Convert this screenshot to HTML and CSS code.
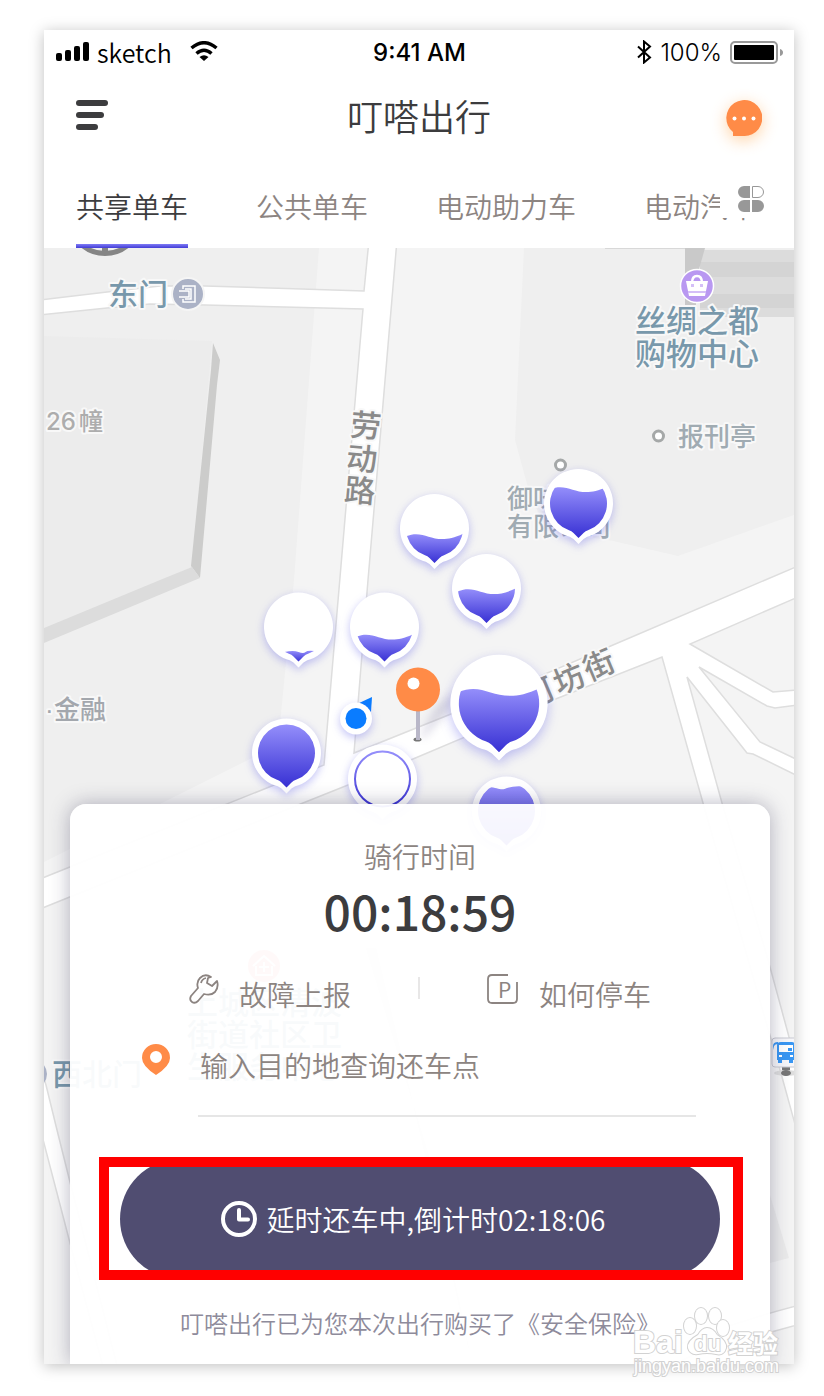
FILE: index.html
```html
<!DOCTYPE html>
<html lang="zh-CN">
<head>
    <meta charset="UTF-8">
    <meta name="viewport" content="width=device-width, initial-scale=1.0">
    <title>叮嗒出行</title>
    <link rel="stylesheet" href="styles.css">
</head>
<body>
    <div class="phone">
        <header>
            <!-- 状态栏 -->
            <div class="status">
                <div class="status-left">
                    <svg width="34" height="21" viewBox="0 0 34 21"><rect x="0" y="12" width="6" height="8" rx="2"/><rect x="9" y="9" width="6" height="11" rx="2"/><rect x="18" y="5" width="6" height="15" rx="2"/><rect x="27" y="1" width="6" height="19" rx="2"/></svg>
                    <span class="carrier">sketch</span>
                    <svg class="wifi" width="28" height="21" viewBox="0 0 28 21"><path d="M1.500 7Q14-3.500 26.500 7M6.500 12.500Q14 6 21.500 12.500" fill="none" stroke="#000" stroke-width="3.500"/><path d="M9.500 16Q14 12.500 18.500 16L14 20Z"/></svg>
                </div>
                <span class="time">9:41 AM</span>
                <div class="status-right">
                    <svg width="16" height="24" viewBox="0 0 16 24"><path d="M2 6.500L14 17.500L8 22.500V1.500L14 6.500L2 17.500" fill="none" stroke="#000" stroke-width="2"/></svg>
                    <span class="percent">100%</span>
                    <svg width="53" height="23" viewBox="0 0 53 23"><rect x="1" y="1" width="46" height="21" rx="4" fill="#fff" stroke="#999" stroke-width="2"/><rect x="4" y="4" width="40" height="15" rx="1"/><path d="M50 8Q53 9 53 11.500T50 15Z" fill="#999"/></svg>
                </div>
            </div>

            <!-- 标题栏 -->
            <div class="titlebar">
                <button class="icon-btn" aria-label="菜单">
                    <svg width="32" height="30" viewBox="0 0 32 30" fill="#3c3c3e"><rect width="32" height="6" rx="3"/><rect y="12" width="28" height="6" rx="3"/><rect y="24" width="22" height="6" rx="3"/></svg>
                </button>
                <h1>叮嗒出行</h1>
                <button class="icon-btn chat" aria-label="消息">
                    <svg width="36" height="36" viewBox="0 0 36 36"><path d="M7 36V32A18 18 0 1 1 18 36Z" fill="#ff8b47"/><circle cx="8.500" cy="18.500" r="2" fill="#fff"/><circle cx="18" cy="18.500" r="2" fill="#fff"/><circle cx="27.500" cy="18.500" r="2" fill="#fff"/></svg>
                </button>
            </div>

            <!-- 车型切换 -->
            <nav class="tabs">
                <button class="tab active">共享单车</button>
                <button class="tab">公共单车</button>
                <button class="tab">电动助力车</button>
                <button class="tab">电动汽车</button>
                <button class="more" aria-label="全部">
                    <svg width="28" height="28" viewBox="0 0 28 28" fill="#989898"><path d="M13 1V13H7A6 6 0 0 1 7 1ZM13 15V27H7A6 6 0 0 1 7 15ZM15 15V27H21A6 6 0 0 0 21 15Z"/><path d="M15.500 1.500V12.500H21A5.500 5.500 0 0 0 21 1.500Z" fill="#fff" stroke="#989898"/></svg>
                </button>
            </nav>
        </header>

        <main>
            <svg class="map" viewBox="44 248 750 1116" preserveAspectRatio="xMidYMin slice">
                <defs>
                    <linearGradient id="liquid" x1="0" y1="0" x2="0" y2="1">
                        <stop offset="0" stop-color="#958ffb"/>
                        <stop offset="1" stop-color="#362fd3"/>
                    </linearGradient>
                    <clipPath id="inner">
                        <path d="M0 34.500L-5 29.500Q-7 27.500-9.500 26.800A28.500 28.500 0 1 1 9.500 26.800Q7 27.500 5 29.500Z"/>
                    </clipPath>
                    <path id="drop" d="M0 40.500L-5 35.500Q-9 32.500-12 32.300A34.500 34.500 0 1 1 12 32.300Q9 32.500 5 35.500Z"/>
                    <filter id="soft" x="-50%" y="-50%" width="200%" height="200%"><feGaussianBlur stdDeviation="4"/></filter>
                </defs>

                <!-- 地块 -->
                <rect x="44" y="248" width="750" height="1116" fill="#f4f4f4"/>
                <path class="block" d="M44 248H319L294 580L278 745L44 862Z"/>
                <path class="block" d="M524 248L515 440L527 484L545 530L613 541L678 556L794 515V248Z"/>
                <circle cx="105" cy="218" r="35.500" fill="none" stroke="#858585" stroke-width="5"/>
                <path d="M102 240H108V255H102Z" fill="#858585"/>

                <!-- 建筑 -->
                <path d="M44 336L212 341L192 567L44 632Z" fill="#ececec"/>
                <path d="M213 343L220 360L217 385L200 578L191 566L211 370Z" fill="#cccccb"/>
                <path d="M44 628L160 580L192 567L200 578L44 643Z" fill="#dcdcdc"/>
                <path d="M605 248H700V249H605Z" fill="#d8d8d8"/>
                <path d="M700 250H794V317H700Z" fill="#dcdcdc"/>
                <path d="M700 262H794V277H700ZM700 294H794V308H700Z" fill="#d4d4d4"/>
                <path d="M685 248H705L696 280V305H685Z" fill="#c9c9c9"/>
                <path d="M770 1195L789 1258L770 1263Z" fill="#ebebeb"/>
                <path d="M366 948L376 948L424 1150L472 1364L430 1160Z" fill="#dedede"/>

                <!-- 道路 -->
                <path class="road" d="M40 879L324 765L346 507L363 309L205 305L150 304L107 308L40 315V300L107 292L160 286L205 286L364 291L369 240H397L368 580L354 753L451 714L613 645L798 566V597L690 644L773 692L798 690V705L775 708L767 706L699 667L760 742L798 760V776L753 754L747 753L687 677L722 803L770 967L789 1037L798 1065V1135L782 1077L703 803L662 657L548 702L413 759L303 803L40 909Z"/>
                <path class="road" d="M40 1065L46 1085L57 1130L70 1182L118 1370H104L70 1243L40 1128Z"/>
                <path class="road" d="M620 1370Q710 1328 800 1305V1324L700 1352L660 1370Z"/>

                <!-- 地名 -->
                <text class="place" x="108" y="305">东门</text>
                <g transform="translate(188 294)">
                    <circle r="16" fill="#abb2c6" stroke="#f5f5f5" stroke-width="2"/>
                    <path d="M-5-5V-8H7V8H-5V5M-9-3H1V3H-9M-3-5H3V5H-3" fill="none" stroke="#fff" stroke-width="1.500"/>
                </g>
                <text class="building" x="46" y="430">26<tspan dx="3">幢</tspan></text>
                <g class="street">
                    <text transform="translate(366 426) rotate(5)" y="11">劳</text>
                    <text transform="translate(362 459) rotate(5)" y="11">动</text>
                    <text transform="translate(360 491) rotate(5)" y="11">路</text>
                    <text transform="translate(538 693) rotate(-23)" y="11">河</text>
                    <text transform="translate(569 679) rotate(-23)" y="11">坊</text>
                    <text transform="translate(599 665) rotate(-23)" y="11">街</text>
                </g>
                <text class="place mall" x="635" y="332">丝绸之都</text>
                <text class="place mall" x="635" y="365">购物中心</text>
                <g transform="translate(697 286)">
                    <circle r="16.500" fill="#b998f1" stroke="#fff" stroke-width="1.500"/>
                    <path d="M-11-5H11L8 10H-8Z" fill="#fff"/>
                    <path d="M-5-3Q-5-10 0-10T5-3" fill="none" stroke="#fff" stroke-width="2.500"/>
                    <path d="M-9 5H9V7H-9ZM-6-2H-3V1H-6ZM3-2H6V1H3Z" fill="#d4bff7"/>
                </g>
                <circle class="dot" cx="658.500" cy="436" r="5"/>
                <text class="poi" x="678" y="446">报刊亭</text>
                <circle class="dot" cx="560.500" cy="465" r="5"/>
                <text class="poi" x="507" y="508">御味</text>
                <text class="poi" x="507" y="536">有限公司</text>
                <text class="poi bank" x="45" y="719">·<tspan x="54">金融</tspan></text>
                <circle cx="33" cy="1074" r="14" fill="#abb2c6"/>
                <text class="place" x="52" y="1085">西北门</text>
                <g transform="translate(264 966)">
                    <circle r="16" fill="#f58c8c"/>
                    <path d="M-11 0L0-10L11 0M-8 0V9H8V0M0-4V6M-5 1H5" fill="none" stroke="#fff" stroke-width="2"/>
                </g>
                <text class="place mall" x="187" y="1014">上城区清波</text>
                <text class="place mall" x="187" y="1046">街道社区卫</text>
                <text class="place mall" x="187" y="1078">生服务中心</text>
                <g transform="translate(772 1038)">
                    <path d="M10 29H18V34H10Z" fill="#777"/>
                    <ellipse cx="14" cy="35" rx="12" ry="3" fill="#ddd"/>
                    <ellipse cx="14" cy="35" rx="5" ry="3" fill="#777"/>
                    <rect x="0" y="0" width="30" height="29" rx="3" fill="#f7f7fa" stroke="#c9cad2"/>
                    <path d="M5 7Q5 4 9 4H20Q23 4 23 8V22H21V25H17V22H10V25H6V22H5Z" fill="#3997f3"/>
                    <path d="M7 7H21V14H7Z" fill="#fff"/>
                    <path d="M16 10H20V13H16ZM2 12V8Q3 6 6 6V4Q1 4 1 8Z" fill="#3997f3"/>
                    <path d="M7 17H10V19H7ZM18 17H21V19H18Z" fill="#fff"/>
                </g>

                <!-- 单车点 -->
                <g transform="translate(434.500 528.500)">
                    <use href="#drop" class="pin"/>
                    <g clip-path="url(#inner)"><path class="fill" d="M-29 8C-8-1-2 20 29 5V35H-29Z"/></g>
                </g>
                <g transform="translate(578.500 503.500)">
                    <use href="#drop" class="pin"/>
                    <g clip-path="url(#inner)"><path class="fill" d="M-29-14C-8-23-2-2 29-17V35H-29Z"/></g>
                </g>
                <g transform="translate(486.500 588.500)">
                    <use href="#drop" class="pin"/>
                    <g clip-path="url(#inner)"><path class="fill" d="M-29 3C-8-6-2 15 29 0V35H-29Z"/></g>
                </g>
                <g transform="translate(298.500 627)">
                    <use href="#drop" class="pin"/>
                    <g clip-path="url(#inner)"><path class="fill" d="M-14 25Q-5 23 0 25T7 25T16 24V35H-14Z"/></g>
                </g>
                <g transform="translate(384.500 627)">
                    <use href="#drop" class="pin"/>
                    <g clip-path="url(#inner)"><path class="fill" d="M-29 10C-8 1-2 22 29 7V35H-29Z"/></g>
                </g>
                <g transform="translate(286.500 753)">
                    <use href="#drop" class="pin"/>
                    <g clip-path="url(#inner)"><path class="fill" d="M-29-29H29V35H-29Z"/></g>
                </g>
                <g transform="translate(382.500 779)">
                    <use href="#drop" class="pin"/>
                    <circle r="27.500" fill="none" stroke="url(#liquid)" stroke-width="2"/>
                </g>
                <g transform="translate(506.500 811)">
                    <use href="#drop" class="pin"/>
                    <g clip-path="url(#inner)"><path class="fill" d="M-29-22C-12-27-8-20-2-22S12-27 29-22V35H-29Z"/></g>
                </g>

                <!-- 大头针 -->
                <path d="M420 737L436 706L456 690L452 706L424 738Z" fill="#8f8ab0" opacity=".3" filter="url(#soft)"/>
                <g transform="translate(499 703.500) scale(1.410)">
                    <use href="#drop" class="pin"/>
                    <g clip-path="url(#inner)"><path class="fill" d="M-29-8C-8-17-2 4 29-11V35H-29Z"/></g>
                </g>
                <ellipse cx="417.500" cy="739.500" rx="4" ry="2" fill="#777"/>
                <path d="M416 708H420V740H416Z" fill="#b9b7c8"/>
                <circle cx="418" cy="689.500" r="22" fill="#ff8b47"/>
                <circle cx="413.500" cy="683.500" r="6" fill="#fff"/>

                <!-- 当前位置 -->
                <path d="M357 704L372 697L371 712Z" fill="#0a7cff"/>
                <circle class="pin" cx="356" cy="718.500" r="16"/>
                <circle cx="356" cy="718.500" r="10.500" fill="#0a7cff"/>
            </svg>

            <!-- 骑行面板 -->
            <section class="panel">
                <p class="label">骑行时间</p>
                <p class="timer">00:18:59</p>
                <div class="actions">
                    <button class="action">
                        <svg width="30" height="30" viewBox="0 0 30 30" fill="none" stroke="#8c8481" stroke-width="1.800" stroke-linejoin="round"><path d="M22 3Q16-1 11 4Q7 8 9 14L2 22Q0 26 3 28Q6 30 9 27L15 20Q22 22 26 18Q30 13 28 7L23 12L18 9L19 4Z"/><path d="M12 9Q13 5 17 4"/></svg>
                        <span>故障上报</span>
                    </button>
                    <i class="divider"></i>
                    <button class="action">
                        <svg width="32" height="30" viewBox="0 0 32 30"><path d="M21 1H5Q1 1 1 5V25Q1 29 5 29H26Q30 29 30 25V8" fill="none" stroke="#8c8481" stroke-width="1.800"/><text class="park" x="11" y="24">P</text></svg>
                        <span>如何停车</span>
                    </button>
                </div>
                <div class="search">
                    <svg width="28" height="32" viewBox="0 0 28 32"><path d="M14 0A14 14 0 0 0 0 14Q0 22 14 31Q28 22 28 14A14 14 0 0 0 14 0ZM14 7A6 6 0 1 1 14 19A6 6 0 1 1 14 7Z" fill="#ff8b47"/></svg>
                    <input type="text" aria-label="目的地" placeholder="输入目的地查询还车点">
                </div>
                <div class="return-wrap">
                    <button class="return">
                        <svg width="36" height="36" viewBox="0 0 36 36" fill="none" stroke="#fff" stroke-width="4"><circle cx="18" cy="18" r="16"/><path d="M18 9V18.500H27" stroke-linecap="round" stroke-linejoin="round"/></svg>
                        <span>延时还车中,倒计时02:18:06</span>
                    </button>
                </div>
                <p class="insurance">叮嗒出行已为您本次出行购买了《安全保险》</p>
            </section>
        </main>

        <!-- 水印 -->
        <svg class="watermark" width="154" height="76" viewBox="0 0 154 76">
            <g class="brand">
                <text x="3" y="49">Bai</text>
                <ellipse cx="60" cy="22" rx="6" ry="8"/>
                <ellipse cx="71" cy="12" rx="6" ry="8"/>
                <ellipse cx="85" cy="12" rx="6" ry="8"/>
                <ellipse cx="93" cy="24" rx="6" ry="8"/>
                <path d="M77 24Q83 24 87 31Q97 37 96 44Q94 52 86 50Q77 48 68 50Q60 51 58 44Q57 37 68 31Q72 24 77 24Z"/>
                <text class="du" x="64" y="47">du</text>
                <text class="exp" x="98" y="49">经验</text>
            </g>
            <text class="url" x="4" y="68">jingyan.baidu.com</text>
        </svg>
    </div>
</body>
</html>
```

FILE: styles.css
```css
* {
    box-sizing: border-box;
}

body {
    margin: 0;
    padding: 30px 30px 32px 44px;
    background-color: #fff;
    color: #3c3c3e;
    font-family: "Noto Sans CJK SC", sans-serif;
}

button {
    padding: 0;
    border: none;
    background: none;
    color: inherit;
    font-family: inherit;
    font-weight: inherit;
    cursor: pointer;
}

svg {
    display: block;
    flex: none;
}

h1,
p {
    margin: 0;
}

.phone {
    position: relative;
    background-color: #fff;
    box-shadow: 0 2px 14px rgba(0, 0, 0, 0.25);
}

/* 状态栏 */
.status {
    display: grid;
    grid-template-columns: 1fr auto 1fr;
    align-items: center;
    height: 44px;
    padding: 0 11px 0 12px;
    color: #000;
}

.status-left,
.status-right {
    display: flex;
    align-items: center;
    gap: 7px;
}

.status-left {
    align-items: flex-start;
}

.status-right {
    justify-content: flex-end;
    gap: 8px;
}

.carrier {
    font-size: 25px;
    font-weight: 350;
    line-height: 22px;
}

.wifi {
    margin-left: 11px;
}

.time {
    font-family: Inter, sans-serif;
    font-size: 24px;
    font-weight: 500;
}

.percent {
    font-family: Inter, sans-serif;
    font-size: 24px;
    font-weight: 300;
}

/* 标题栏 */
.titlebar {
    display: grid;
    grid-template-columns: 1fr auto 1fr;
    align-items: start;
    height: 86px;
    padding: 26px 32px 0;
}

h1 {
    font-size: 36px;
    font-weight: 350;
    line-height: 30px;
}

.icon-btn {
    justify-self: start;
}

.chat {
    justify-self: end;
    filter: drop-shadow(0 4px 8px rgba(255, 160, 60, 0.45));
}

/* 车型切换 */
.tabs {
    position: relative;
    display: flex;
    gap: 68px;
    height: 88px;
    padding-left: 32px;
    overflow: hidden;
}

.tab {
    flex: none;
    padding-top: 4px;
    color: #8c8481;
    font-size: 28px;
    font-weight: 350;
}

.tab.active {
    background: linear-gradient(#7f7bf5, #423cd6) no-repeat bottom / 100% 4px;
    color: #3c3c3e;
}

.more {
    position: absolute;
    top: 20px;
    right: 0;
    width: 74px;
    height: 38px;
    padding-left: 17px;
    background-color: #fff;
}

/* 地图 */
main {
    position: relative;
    padding: 556px 24px 0 26px;
    overflow: hidden;
}

.map {
    position: absolute;
    top: 0;
    left: 0;
    width: 100%;
    height: 100%;
}

.block {
    fill: #efefef;
}

.road {
    fill: #fff;
    stroke: #dedede;
    stroke-width: 1.5px;
}

.map text {
    stroke: #f8f8f8;
    stroke-width: 4px;
    stroke-linejoin: round;
    paint-order: stroke;
}

.place {
    fill: #7898ab;
    font-size: 30px;
    font-weight: 500;
}

.mall {
    font-size: 31px;
}

.building {
    fill: #adadad;
    font-family: Inter, "Noto Sans CJK SC", sans-serif;
    font-size: 24px;
    font-weight: 500;
}

.street {
    fill: #8a8a8a;
    font-size: 31px;
    font-weight: 500;
    text-anchor: middle;
}

.poi {
    fill: #a0abb2;
    font-size: 26px;
    font-weight: 500;
}

.bank {
    fill: #a3a7ad;
    font-family: "Liberation Sans", "Noto Sans CJK SC", sans-serif;
}

.dot {
    fill: #fff;
    stroke: #a5a8a8;
    stroke-width: 3px;
}

.pin {
    fill: #fff;
    filter: drop-shadow(0 3px 4px rgba(80, 80, 230, 0.35));
}

.fill {
    fill: url(#liquid);
}

/* 骑行面板 */
.panel {
    position: relative;
    display: flex;
    flex-direction: column;
    padding: 32px 50px 25px;
    border-radius: 16px 16px 0 0;
    background-color: rgba(255, 255, 255, 0.95);
    box-shadow: 0 0 20px rgba(50, 45, 80, 0.35);
    color: #8c8481;
    font-size: 28px;
    font-weight: 350;
    line-height: 40px;
}

.label,
.timer,
.insurance {
    text-align: center;
}

.timer {
    margin-top: 4px;
    color: #3c3c3e;
    font-size: 48px;
    font-weight: 500;
    line-height: 60px;
}

.actions {
    display: flex;
    justify-content: center;
    gap: 67px;
    margin-top: 34px;
}

.action {
    display: flex;
    align-items: flex-start;
    gap: 20px;
    font-size: 28px;
    line-height: 40px;
}

.divider {
    width: 2px;
    height: 22px;
    margin-top: 3px;
    background-color: #e8e7e7;
}

.park {
    fill: #8c8481;
    font-size: 21px;
    font-weight: 400;
}

.search {
    display: flex;
    gap: 28px;
    margin-top: 30px;
    padding: 0 24px 0 22px;
}

.search input {
    flex: 1;
    min-width: 0;
    height: 73px;
    padding: 0 0 29px 2px;
    border: none;
    border-bottom: 2px solid #e6e6e6;
    background: none;
    color: inherit;
    font: inherit;
}

.search input::placeholder {
    color: #8c8481;
    opacity: 1;
}

/* 还车按钮，外面是红色标注框 */
.return-wrap {
    position: relative;
    margin-top: 42px;
}

.return-wrap::after {
    content: "";
    position: absolute;
    top: -2px;
    right: -23px;
    bottom: -1px;
    left: -21px;
    border: 10px solid #f00;
    pointer-events: none;
}

.return {
    display: flex;
    align-items: center;
    justify-content: center;
    gap: 10px;
    width: 100%;
    height: 120px;
    padding-right: 14px;
    border-radius: 60px;
    background-color: #504d71;
    color: #fff;
    font-size: 28px;
}

.insurance {
    margin: 28px -20px 0;
    color: #8e8b9b;
    font-size: 24px;
    line-height: 32px;
}

/* 水印 */
.watermark {
    position: absolute;
    right: 10px;
    bottom: -16px;
    overflow: visible;
}

.watermark text,
.brand ellipse,
.brand path {
    fill: #fff;
    stroke: #d2d2d2;
    stroke-width: 2px;
    paint-order: stroke;
}

.watermark .brand text {
    font-family: "Liberation Sans", "Noto Sans CJK SC", sans-serif;
    font-size: 32px;
    font-weight: 700;
}

.watermark .brand .du {
    font-size: 22px;
}

.watermark .brand .exp {
    font-size: 25px;
}

.watermark .url {
    font-family: "Liberation Sans", sans-serif;
    font-size: 18px;
}
```
